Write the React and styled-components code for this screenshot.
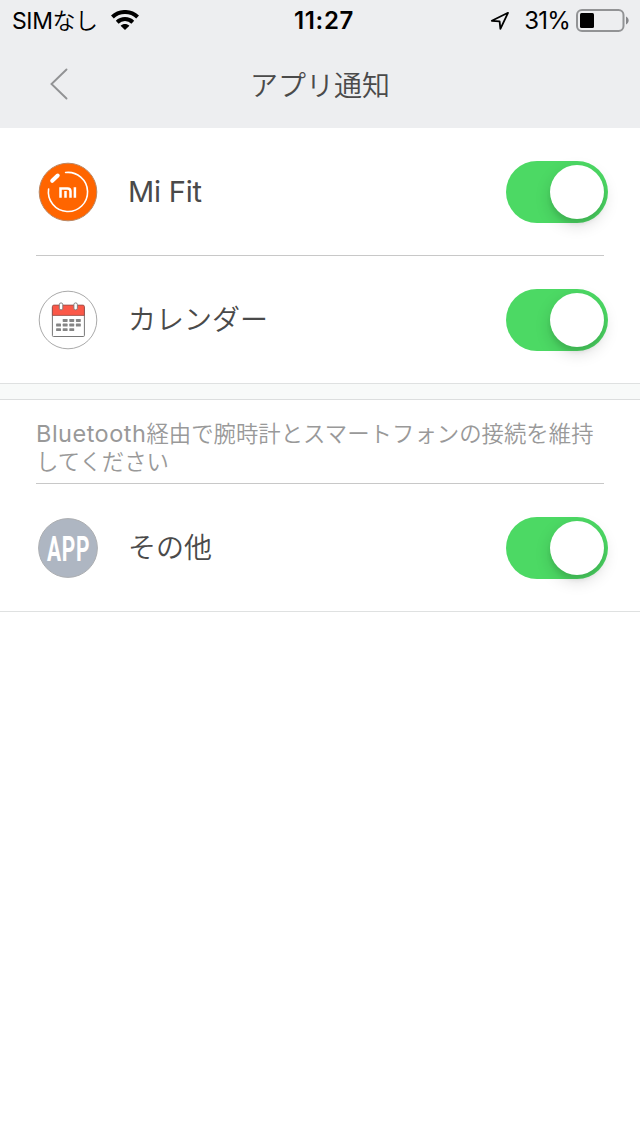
import React, { useState } from 'react';
import styled, { createGlobalStyle } from 'styled-components';

const GlobalStyle = createGlobalStyle`
  * { box-sizing: border-box; }
  html, body { margin: 0; padding: 0; background: #fff; }
  body {
    font-family: Inter, "Noto Sans CJK JP", sans-serif;
    color: #4a4a4a;
  }
`;

const Screen = styled.div`
  width: 640px;
  min-height: 1136px;
  background: #fff;
`;

const Header = styled.header`
  height: 128px;
  background: #edeef0;
`;

const StatusBar = styled.div`
  display: grid;
  grid-template-columns: 1fr auto 1fr;
  align-items: center;
  height: 40px;
  padding: 0 11px 0 12px;
  color: #000;
  font-size: 24px;
  line-height: 40px;
`;

const StatusGroup = styled.div`
  display: flex;
  align-items: center;
  justify-content: ${(p) => (p.$end ? 'flex-end' : 'flex-start')};
  white-space: nowrap;
  svg {
    flex: none;
    margin-bottom: 2px;
  }
`;

const Carrier = styled.span`
  margin-right: 13px;
  padding-top: 1px;
  font-size: 23px;
  font-weight: 350;
  letter-spacing: -0.4px;
`;

const CarrierLatin = styled.span`
  font-weight: 400;
`;

const Clock = styled.span`
  padding: 1px 0 0 7px;
  font-size: 24px;
  font-weight: 600;
  letter-spacing: 0.7px;
`;

const Percent = styled.span`
  margin: 0 6px 0 14px;
  padding-top: 1px;
  font-size: 24px;
  letter-spacing: -0.8px;
`;

const NavBar = styled.nav`
  display: grid;
  grid-template-columns: 120px 1fr 120px;
  align-items: center;
  height: 88px;
`;

const BackButton = styled.button`
  display: flex;
  padding: 0 0 0 49px;
  border: 0;
  background: none;
`;

const Title = styled.h1`
  margin: 0;
  padding-top: 3px;
  text-align: center;
  font-size: 28px;
  line-height: 40px;
  font-weight: 350;
`;

const Section = styled.section`
  border-bottom: 1px solid #dfe1e1;
`;

const SectionGap = styled.div`
  height: 16px;
  background: #f8faf9;
  border-bottom: 1px solid #dcdede;
`;

const Row = styled.div`
  display: flex;
  align-items: center;
  height: 127px;
  padding: 0 32px 0 37px;
`;

const Divider = styled.div`
  height: 1px;
  margin: 0 36px;
  background: #c8c8c8;
`;

const Label = styled.span`
  flex: 1;
  margin-left: 29px;
  padding-top: 1px;
  font-size: 28px;
  line-height: 40px;
  font-weight: 350;
`;

const LatinLabel = styled(Label)`
  font-size: 29px;
  font-weight: 400;
  letter-spacing: -0.2px;
`;

const Note = styled.p`
  height: 83px;
  margin: 0;
  padding: 20px 36px 0;
  color: #999;
  font-size: 22.4px;
  line-height: 28px;
  font-weight: 350;
  white-space: nowrap;
`;

const NoteLatin = styled.span`
  font-size: 23.5px;
  font-weight: 400;
  letter-spacing: 0.5px;
`;

const Switch = styled.button`
  display: flex;
  justify-content: ${(p) => (p.$on ? 'flex-end' : 'flex-start')};
  align-items: center;
  width: 102px;
  height: 62px;
  padding: 4px;
  border: 0;
  border-radius: 31px;
  background: ${(p) => (p.$on ? '#4cd964' : '#e5e5e5')};
`;

const Knob = styled.span`
  width: 54px;
  height: 54px;
  border-radius: 50%;
  background: #fff;
  box-shadow: 0 6px 16px rgba(0, 0, 0, 0.15), 0 5px 4px rgba(0, 0, 0, 0.07);
`;

const RowIcon = styled.svg`
  display: block;
  flex: none;
  width: 62px;
  height: 62px;
`;

function Toggle({ label }) {
  const [on, setOn] = useState(true);
  return (
    <Switch type="button" role="switch" aria-checked={on} aria-label={label} $on={on} onClick={() => setOn(!on)}>
      <Knob />
    </Switch>
  );
}

const WifiIcon = () => (
  <svg width="28" height="20" viewBox="0 0 28 20" fill="none" stroke="#000" strokeWidth="4">
    <path d="M1.4 7C8.4 .3 19.6 .3 26.6 7" />
    <path d="M6.2 12.2C10.5 8 17.5 8 21.8 12.2" />
    <path d="M14 20l-4.4-4.3c2.4-2.3 6.4-2.3 8.8 0z" fill="#000" stroke="none" />
  </svg>
);

const LocationIcon = () => (
  <svg width="20" height="20" viewBox="0 0 20 20" fill="none" stroke="#000" strokeWidth="1.8" strokeLinejoin="round">
    <path d="M18 2.8L1.8 10.8l7.8.6.8 7.5z" />
  </svg>
);

const BatteryIcon = () => (
  <svg width="53" height="24" viewBox="0 0 53 24">
    <rect x="1" y="2" width="46.5" height="21" rx="5" fill="none" stroke="#929395" strokeWidth="2" />
    <rect x="4" y="5" width="14" height="15" rx="1.5" fill="#000" />
    <path d="M50 8.5c3.5 1.5 3.5 6.5 0 8z" fill="#86878a" />
  </svg>
);

const BackIcon = () => (
  <svg width="20" height="32" viewBox="0 0 20 32" fill="none" stroke="#919294" strokeWidth="1.9" strokeLinecap="round">
    <path d="M17.5 1.5L2.5 16l15 14.5" />
  </svg>
);

const MiFitIcon = () => (
  <RowIcon viewBox="0 0 62 62">
    <circle cx="31" cy="31" r="28.8" fill="#ff6500" stroke="#bb8763" strokeWidth="1" />
    <path d="M28.6 11.5A19.6 19.6 0 1 1 11.6 28" fill="none" stroke="#fff" strokeWidth="1.6" strokeLinecap="round" />
    <path d="M15.2 19.8l5.5-5.3" stroke="#fff" strokeWidth="4" strokeLinecap="round" />
    <path d="M23.5 36.7v-9.2h7q3 0 3 3v6.2M28.5 30v6.7M37.9 26.3v10.4" fill="none" stroke="#fff" strokeWidth="2.5" />
  </RowIcon>
);

const CALENDAR_DAYS = [
  [25.7, 30], [32.3, 30], [38.9, 30],
  [19.1, 34.6], [25.7, 34.6], [32.3, 34.6], [38.9, 34.6],
  [19.1, 39.2], [25.7, 39.2], [32.3, 39.2],
];

const CalendarIcon = () => (
  <RowIcon viewBox="0 0 62 62">
    <circle cx="31" cy="31" r="28.8" fill="#fff" stroke="#aaa" strokeWidth="1" />
    <rect x="15.4" y="17.5" width="32" height="30" rx="1" fill="#fff" stroke="#777" strokeWidth="1" />
    <path d="M15.4 26.4v-8.8q0-1.5 1.5-1.5h29q1.5 0 1.5 1.5v8.8z" fill="#fb5848" stroke="#914d48" strokeWidth=".8" />
    <rect x="22.3" y="13.9" width="3.5" height="7" rx="1.75" fill="#fff" stroke="#777" strokeWidth=".9" />
    <rect x="36.9" y="13.9" width="3.5" height="7" rx="1.75" fill="#fff" stroke="#777" strokeWidth=".9" />
    {CALENDAR_DAYS.map(([x, y]) => (
      <rect key={`${x}-${y}`} x={x} y={y} width="4.9" height="2.9" rx=".6" fill="#858585" />
    ))}
  </RowIcon>
);

const AppIcon = () => (
  <RowIcon viewBox="0 0 62 62">
    <circle cx="31" cy="31" r="29.4" fill="#aeb6c2" stroke="#adafb2" strokeWidth="1" />
    <g transform="translate(31.5 43.8) scale(0.59 1)">
      <text
        textAnchor="middle"
        fill="#fff"
        fontFamily="Roboto, sans-serif"
        fontWeight="700"
        fontSize="35.5"
        letterSpacing="1.2"
      >
        APP
      </text>
    </g>
  </RowIcon>
);

export default function App() {
  return (
    <>
      <GlobalStyle />
      <Screen>
        <Header>
          <StatusBar>
            <StatusGroup>
              <Carrier>
                <CarrierLatin>SIM</CarrierLatin>なし
              </Carrier>
              <WifiIcon />
            </StatusGroup>
            <Clock>11:27</Clock>
            <StatusGroup $end>
              <LocationIcon />
              <Percent>31%</Percent>
              <BatteryIcon />
            </StatusGroup>
          </StatusBar>
          <NavBar>
            <BackButton type="button" aria-label="戻る">
              <BackIcon />
            </BackButton>
            <Title>アプリ通知</Title>
          </NavBar>
        </Header>
        <Section>
          <Row>
            <MiFitIcon />
            <LatinLabel>Mi Fit</LatinLabel>
            <Toggle label="Mi Fit" />
          </Row>
          <Divider />
          <Row>
            <CalendarIcon />
            <Label>カレンダー</Label>
            <Toggle label="カレンダー" />
          </Row>
        </Section>
        <SectionGap />
        <Section>
          <Note>
            <NoteLatin>Bluetooth</NoteLatin>経由で腕時計とスマートフォンの接続を維持
            <br />
            してください
          </Note>
          <Divider />
          <Row>
            <AppIcon />
            <Label>その他</Label>
            <Toggle label="その他" />
          </Row>
        </Section>
      </Screen>
    </>
  );
}
